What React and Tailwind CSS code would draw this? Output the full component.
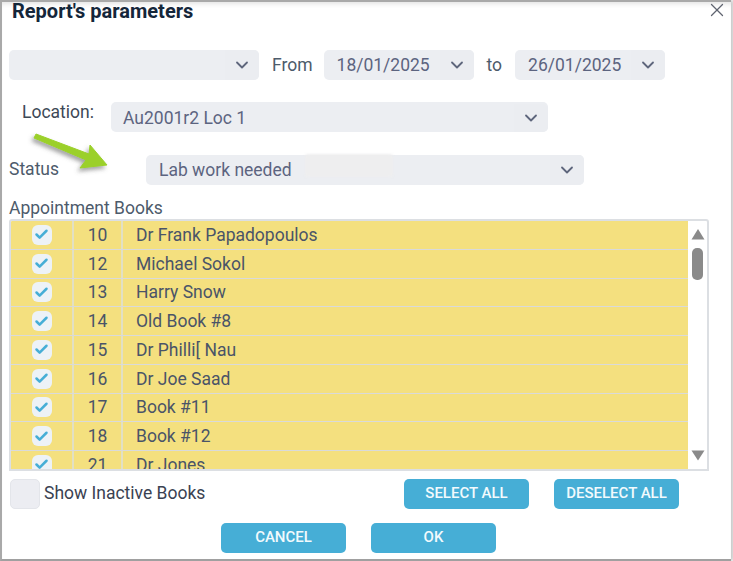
import React from 'react'
import { ChevronDown, X, Check } from 'lucide-react'

const books = [
  [10, 'Dr Frank Papadopoulos'],
  [12, 'Michael Sokol'],
  [13, 'Harry Snow'],
  [14, 'Old Book #8'],
  [15, 'Dr Philli[ Nau'],
  [16, 'Dr Joe Saad'],
  [17, 'Book #11'],
  [18, 'Book #12'],
  [21, 'Dr Jones'],
]

function Select({ value, className = '', children }) {
  return (
    <div className={`relative flex h-[30px] items-center justify-between rounded-[5px] bg-[#eceef2] text-[17.5px] text-[#5c6480] ${className}`}>
      <span>{value}</span>
      {children}
      <span className="flex h-full w-[34px] items-center justify-center rounded-r-[5px] bg-[#ebedf1]">
        <ChevronDown size={20} strokeWidth={2.2} className="text-[#5e667c]" />
      </span>
    </div>
  )
}

function BlueButton({ label, className = '' }) {
  return (
    <button className={`h-[30px] w-[125px] rounded-[5px] bg-[#46aed6] pb-[2px] text-[15px] font-medium text-[#f2fafd] ${className}`}>
      {label}
    </button>
  )
}

function Row({ num, name }) {
  return (
    <div className="flex h-[28.75px] shrink-0 items-center border-b border-[#d9dadb] bg-[#f4e07f] text-[17.5px] text-[#4a5468]">
      <div className="flex h-full w-[63px] items-center justify-center border-r-2 border-[#e2e0c4]">
        <span className="flex h-[20px] w-[20px] items-center justify-center rounded-[6px] bg-[#edf2f7]">
          <Check size={15} strokeWidth={4} className="text-[#46aed6]" />
        </span>
      </div>
      <div className="flex h-full w-[49px] items-center justify-center border-r-2 border-[#e2e0c4]">{num}</div>
      <div className="pl-[13px]">{name}</div>
    </div>
  )
}

export default function App() {
  return (
    <div className="relative h-[561px] w-[733px] overflow-hidden bg-white font-['Roboto',sans-serif] text-[#4d5b6b]">
      <div className="h-[561px] w-[731px] border-t-2 border-b-2 border-l-2 border-[#a9a9a9] border-b-[#a0a0a0] pl-[7px] shadow-[3px_0_4px_#c8c8c8,inset_0_5px_5px_-3px_#e4e4e4]">
        <div className="flex h-[48px] justify-between">
          <h1 className="pl-[3px] text-[20px] leading-[19px] font-bold text-[#14263a]">Report's parameters</h1>
          <X size={22} strokeWidth={1.4} className="-mt-[3px] mr-[3px] text-[#5f6470]" />
        </div>

        <div className="flex items-center">
          <Select className="w-[250px]" />
          <span className="ml-[13px] text-[17.5px]">From</span>
          <Select value="18/01/2025" className="ml-[11px] w-[150px] pl-[13px]" />
          <span className="ml-[13px] text-[17.5px]">to</span>
          <Select value="26/01/2025" className="ml-[13px] w-[150px] pl-[13px]" />
        </div>

        <div className="mt-[22px] flex">
          <span className="ml-[13px] w-[89px] text-[17.5px] leading-[20px] text-[#3d4856]">Location:</span>
          <Select value="Au2001r2 Loc 1" className="w-[437px] pt-[2px] pl-[12px]" />
        </div>

        <div className="mt-[23px] flex items-center">
          <span className="mb-[2px] w-[137px] text-[17.5px]">Status</span>
          <Select value="Lab work needed" className="w-[438px] pl-[13px]">
            <span className="absolute top-[-1px] left-[159px] h-[23px] w-[88px] rounded-[3px] bg-[#eeeeef] blur-[1px]" />
          </Select>
        </div>

        <div className="mt-[13px] h-[21px] text-[17.5px] leading-[20px]">Appointment Books</div>

        <div className="flex h-[252px] w-[700px] overflow-hidden rounded-t-[3px] border-2 border-[#dcdfe3]">
          <div className="flex h-full w-[677px] flex-col overflow-hidden">
            {books.map(([num, name]) => (
              <Row key={num} num={num} name={name} />
            ))}
          </div>
          <div className="flex w-[19px] flex-col items-center pt-[8px]">
            <svg width="14" height="11" viewBox="0 0 14 11"><path d="M7 0 L13.5 10.5 H0.5 Z" fill="#8a8a8a" /></svg>
            <div className="mt-[8px] h-[32px] w-[11px] rounded-[5px] bg-[#8a8a8a]" />
            <svg width="14" height="11" viewBox="0 0 14 11" className="mt-[170px]"><path d="M0.5 0.5 H13.5 L7 10.5 Z" fill="#8a8a8a" /></svg>
          </div>
        </div>

        <div className="mt-[8px] flex items-center">
          <span className="ml-[1px] h-[30px] w-[30px] rounded-[5px] border border-[#e3e5ea] bg-[#ecedf2]" />
          <span className="mb-[1px] ml-[4px] w-[360px] text-[17.5px] text-[#3a4252]">Show Inactive Books</span>
          <BlueButton label="SELECT ALL" />
          <BlueButton label="DESELECT ALL" className="ml-[25px]" />
        </div>

        <div className="mt-[14px] flex pl-[212px]">
          <BlueButton label="CANCEL" />
          <BlueButton label="OK" className="ml-[25px]" />
        </div>
      </div>

      {/* green arrow drawn over the form */}
      <svg className="absolute top-0 left-0" width="733" height="200" viewBox="0 0 733 200">
        <defs>
          <filter id="arrowShadow" x="-30%" y="-30%" width="160%" height="160%">
            <feDropShadow dx="-2" dy="3" stdDeviation="2" floodColor="#555" floodOpacity="0.55" />
          </filter>
        </defs>
        <path
          d="M36 134 L89 154 L90 145 L107 165 L80 168 L86 160 L34 138 Z"
          fill="#9bd02a"
          stroke="#9bd02a"
          strokeLinejoin="round"
          filter="url(#arrowShadow)"
        />
      </svg>
    </div>
  )
}
